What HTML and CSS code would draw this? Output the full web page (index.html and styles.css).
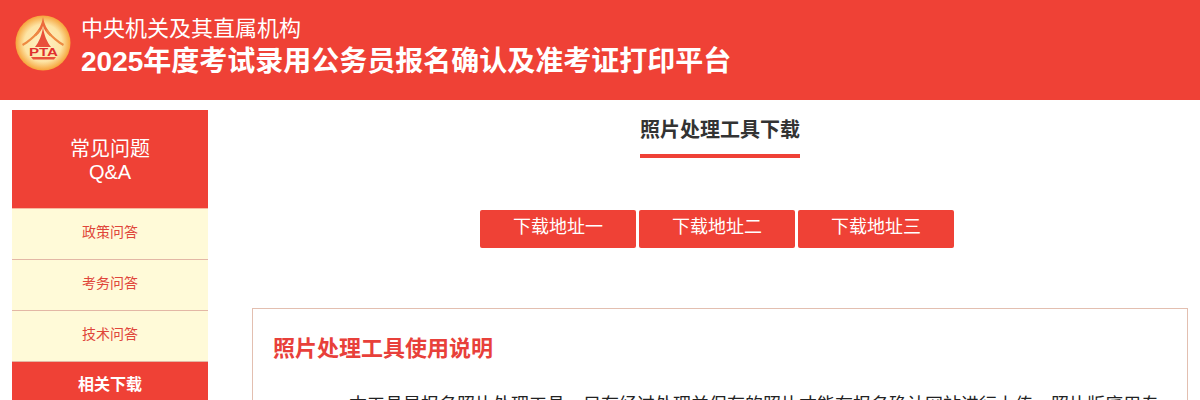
FILE: index.html
```html
<!DOCTYPE html>
<html>
<head>
    <meta charset="UTF-8">
    <title>照片处理工具下载</title>
    <link rel="stylesheet" href="styles.css">
</head>
<body>
    <div class="header">
        <svg class="logo" width="56" height="56" viewBox="0 0 56 56">
            <defs>
                <radialGradient id="disc" cx="50%" cy="50%" r="50%">
                    <stop offset="0%" stop-color="#fff2c6"/>
                    <stop offset="68%" stop-color="#fde4a4"/>
                    <stop offset="100%" stop-color="#f6a33a"/>
                </radialGradient>
            </defs>
            <circle cx="28" cy="28" r="27.5" fill="url(#disc)"/>
            <path d="M28 2C27 9 24 15 19 20L21 21C25 18 27 14 28 11C29 14 31 18 35 21L37 20C32 15 29 9 28 2Z" fill="#ec6a3c"/>
            <path d="M28 12C27 20 24 27 20 32H36C32 27 29 20 28 12Z" fill="#e9503a"/>
            <path d="M7 29C12 26 19 21 24 14L25 16C20 23 13 28 8 31Z" fill="#ee8a42"/>
            <path d="M49 29C44 26 37 21 32 14L31 16C36 23 43 28 48 31Z" fill="#ee8a42"/>
            <path d="M16 42H41L39 44.500H18Z" fill="#e9503a"/>
            <text x="14" y="41" class="logo-text" textLength="29" lengthAdjust="spacingAndGlyphs">PTA</text>
        </svg>
        <div class="header-text">
            <div class="header-sub">中央机关及其直属机构</div>
            <div class="header-title">2025年度考试录用公务员报名确认及准考证打印平台</div>
        </div>
    </div>

    <div class="page">
        <div class="sidebar">
            <div class="side-head">常见问题<br>Q&amp;A</div>
            <a class="side-item" href="#">政策问答</a>
            <a class="side-item" href="#">考务问答</a>
            <a class="side-item" href="#">技术问答</a>
            <a class="side-active" href="#">相关下载</a>
        </div>

        <div class="main">
            <div class="title-wrap">
                <h2 class="main-title">照片处理工具下载</h2>
            </div>
            <div class="buttons">
                <a class="btn" href="#">下载地址一</a>
                <a class="btn" href="#">下载地址二</a>
                <a class="btn" href="#">下载地址三</a>
            </div>
            <div class="notes">
                <h3>照片处理工具使用说明</h3>
                <p>本工具是报名照片处理工具，只有经过处理并保存的照片才能在报名确认网站进行上传，照片版底用专</p>
            </div>
        </div>
    </div>
</body>
</html>
```

FILE: styles.css
```css
html, body {
    height: 400px;
    overflow: hidden;
}
body {
    margin: 0;
    background-color: #fff;
    font-family: "Liberation Sans", "Noto Sans CJK SC", sans-serif;
    color: #333;
}
a {
    text-decoration: none;
}
.header {
    display: flex;
    align-items: flex-start;
    height: 100px;
    padding: 14px 15px 0;
    box-sizing: border-box;
    background-color: #ef4136;
    color: #fff;
}
.logo {
    flex: none;
    margin: 1px 10px 0 0;
}
.logo-text {
    font-family: "Liberation Sans", sans-serif;
    font-size: 11px;
    font-weight: bold;
    fill: #e0302e;
}
.header-sub {
    font-size: 22px;
    line-height: 30px;
}
.header-title {
    font-size: 28px;
    line-height: 36px;
    font-weight: bold;
}
.page {
    display: flex;
    padding: 10px 12px 0;
}
.sidebar {
    flex: none;
    width: 196px;
}
.side-head {
    display: flex;
    flex-direction: column;
    justify-content: center;
    height: 94px;
    padding-top: 4px;
    border-bottom: 1px solid #f8b9a0;
    background-color: #ef4136;
    color: #fff;
    font-size: 20px;
    line-height: 23px;
    text-align: center;
}
.side-item {
    display: block;
    height: 50px;
    border-bottom: 1px solid #e3b7a5;
    background-color: #fffad8;
    color: #e0463a;
    font-size: 14px;
    line-height: 47px;
    text-align: center;
}
.side-active {
    display: block;
    height: 50px;
    background-color: #ef4136;
    color: #fff;
    font-size: 16px;
    font-weight: bold;
    line-height: 46px;
    text-align: center;
}
.main {
    flex: 1;
    padding-left: 44px;
}
.title-wrap {
    display: flex;
    justify-content: center;
}
.main-title {
    margin: 0;
    padding: 0 0 12px;
    height: 32px;
    border-bottom: 4px solid #ef4136;
    font-size: 20px;
    line-height: 40px;
    font-weight: bold;
    color: #333;
}
.buttons {
    display: flex;
    justify-content: center;
    gap: 3px;
    margin-top: 52px;
    padding-right: 6px;
}
.btn {
    width: 156px;
    height: 38px;
    border-radius: 2px;
    background-color: #ef4136;
    color: #fff;
    font-size: 18px;
    line-height: 34px;
    text-align: center;
}
.notes {
    margin-top: 60px;
    padding: 0 20px;
    height: 200px;
    border: 1px solid #e3bfb0;
}
.notes h3 {
    margin: 0;
    padding-top: 24px;
    font-size: 22px;
    line-height: 32px;
    color: #e8403a;
}
.notes p {
    margin: 25px 0 0;
    font-size: 18px;
    line-height: 30px;
    text-indent: 76px;
    color: #222;
}
```
